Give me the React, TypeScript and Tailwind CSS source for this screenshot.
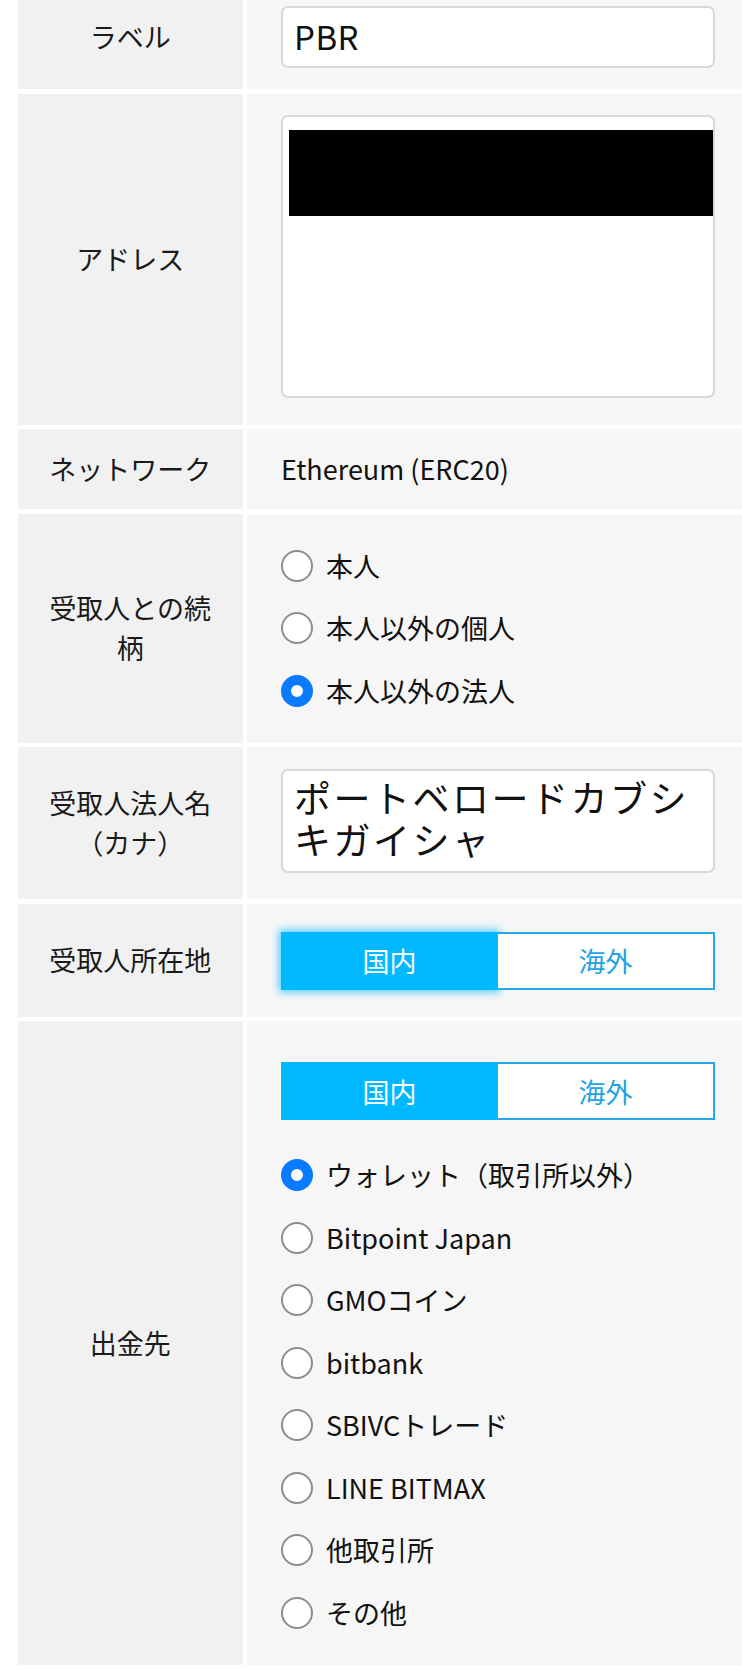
import React from "react";

type Row = { label: string; content: React.ReactNode; valueClass: string };

function Radio({ label, checked }: { label: string; checked?: boolean }) {
    return (
        <div className="flex h-[62.5px] items-center gap-[13px]">
            <span
                className={
                    checked
                        ? "h-[32px] w-[32px] shrink-0 rounded-full border-[10px] border-[#0a7bff] bg-white"
                        : "h-[32px] w-[32px] shrink-0 rounded-full border-[2.5px] border-[#8d8d8d] bg-white"
                }
            />
            <span className="text-[27px] leading-[40px] text-[#111]">{label}</span>
        </div>
    );
}

function Segment({ glow }: { glow?: boolean }) {
    return (
        <div className="grid h-[58px] grid-cols-2 text-[27px] leading-none">
            <div
                className={
                    glow
                        ? "flex items-center justify-center bg-[#00b8fe] text-white shadow-[0_0_8px_2px_rgba(0,184,254,0.7)]"
                        : "flex items-center justify-center bg-[#00b8fe] text-white"
                }
            >
                国内
            </div>
            <div className="flex items-center justify-center border-2 border-l-0 border-[#25a9ea] bg-white text-[#1ea3e4]">
                海外
            </div>
        </div>
    );
}

const destinations = [
    "ウォレット（取引所以外）",
    "Bitpoint Japan",
    "GMOコイン",
    "bitbank",
    "SBIVCトレード",
    "LINE BITMAX",
    "他取引所",
    "その他",
];

export default function App() {
    const rows: Row[] = [
        {
            label: "ラベル",
            valueClass: "py-[21px]",
            content: (
                <div className="flex h-[62px] items-center rounded-[7px] border-2 border-[#d8d8d8] bg-white px-[11px] text-[33px] tracking-[0.5px] text-[#111]">
                    PBR
                </div>
            ),
        },
        {
            label: "アドレス",
            valueClass: "pt-[21px] pb-[27px]",
            content: (
                <div className="h-[283px] rounded-[7px] border-2 border-[#d8d8d8] bg-white pt-[13px] pl-[6px]">
                    <div className="h-[86px] bg-black" />
                </div>
            ),
        },
        {
            label: "ネットワーク",
            valueClass: "py-[20px]",
            content: <div className="text-[27px] leading-[40px] text-[#111]">Ethereum (ERC20)</div>,
        },
        {
            label: "受取人との続柄",
            valueClass: "pt-[21px] pb-[20.5px]",
            content: (
                <div className="flex flex-col">
                    <Radio label="本人" />
                    <Radio label="本人以外の個人" />
                    <Radio label="本人以外の法人" checked />
                </div>
            ),
        },
        {
            label: "受取人法人名（カナ）",
            valueClass: "pt-[22px] pb-[26px]",
            content: (
                <div className="h-[104px] rounded-[7px] border-2 border-[#d8d8d8] bg-white px-[11px] pt-[5px] text-[37px] leading-[42px] tracking-[2.5px] text-[#111]">
                    ポートベロードカブシキガイシャ
                </div>
            ),
        },
        {
            label: "受取人所在地",
            valueClass: "pt-[28px] pb-[27px]",
            content: <Segment glow />,
        },
        {
            label: "出金先",
            valueClass: "pt-[41px] pb-[21px]",
            content: (
                <div className="flex flex-col">
                    <Segment />
                    <div className="mt-[24px] flex flex-col">
                        {destinations.map((d, i) => (
                            <Radio key={d} label={d} checked={i === 0} />
                        ))}
                    </div>
                </div>
            ),
        },
    ];

    return (
        <div className="min-h-[1671px] overflow-hidden bg-white font-['Noto_Sans_CJK_JP',sans-serif] text-[#111]">
            <div className="-mt-[15px] grid grid-cols-[224.5px_1fr] gap-[4.5px] pl-[18px]">
                {rows.map((r) => (
                    <React.Fragment key={r.label}>
                        <div className="flex items-center justify-center bg-[#f1f1f1] px-[20px] text-center text-[27px] leading-[40px] text-[#1a1a1a]">
                            {r.label}
                        </div>
                        <div className={`bg-[#f6f6f6] pl-[34px] pr-[27px] ${r.valueClass}`}>{r.content}</div>
                    </React.Fragment>
                ))}
            </div>
        </div>
    );
}
